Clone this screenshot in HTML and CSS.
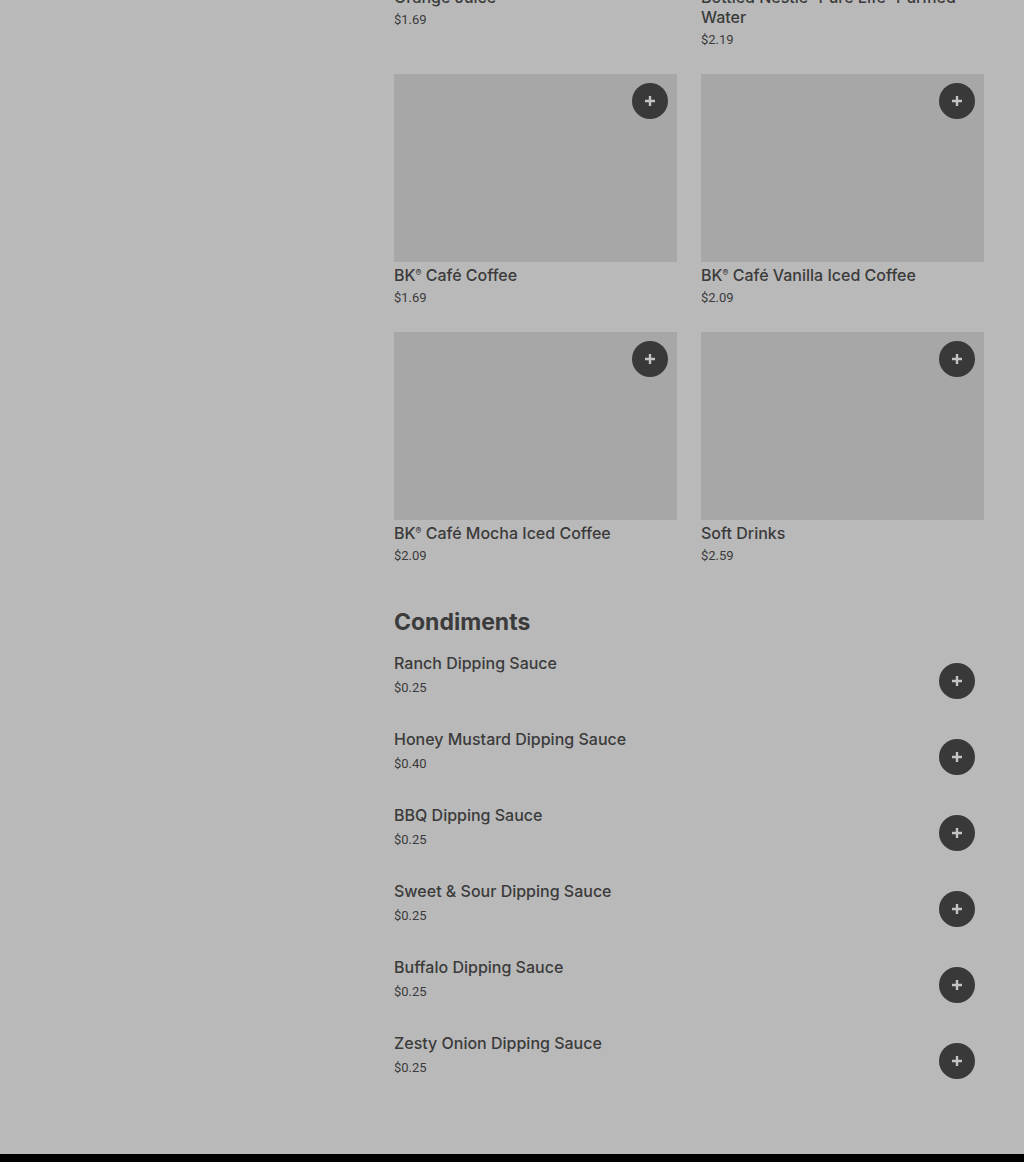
FILE: index.html
```html
<!DOCTYPE html>
<html lang="en">
<head>
  <meta charset="UTF-8" />
  <meta name="viewport" content="width=device-width, initial-scale=1.0"/>
  <title>Menu</title>
  <link rel="stylesheet" href="styles.css">
</head>

<body>
  <div class="page">
    <main class="menu">

      <!-- Beverages (scrolled, top row cut off) -->
      <section class="section">
        <div class="grid">
          <div class="card">
            <div class="thumb"><button class="add" aria-label="Add"><svg viewBox="0 0 12 12"><path d="M6 1v10M1 6h10"/></svg></button></div>
            <div class="name">Orange Juice</div>
            <div class="price">$1.69</div>
          </div>
          <div class="card">
            <div class="thumb"><button class="add" aria-label="Add"><svg viewBox="0 0 12 12"><path d="M6 1v10M1 6h10"/></svg></button></div>
            <div class="name">Bottled Nestlé<span class="reg">®</span> Pure Life<span class="reg">®</span> Purified Water</div>
            <div class="price">$2.19</div>
          </div>
          <div class="card">
            <div class="thumb"><button class="add" aria-label="Add"><svg viewBox="0 0 12 12"><path d="M6 1v10M1 6h10"/></svg></button></div>
            <div class="name">BK<span class="reg">®</span> Café Coffee</div>
            <div class="price">$1.69</div>
          </div>
          <div class="card">
            <div class="thumb"><button class="add" aria-label="Add"><svg viewBox="0 0 12 12"><path d="M6 1v10M1 6h10"/></svg></button></div>
            <div class="name">BK<span class="reg">®</span> Café Vanilla Iced Coffee</div>
            <div class="price">$2.09</div>
          </div>
          <div class="card">
            <div class="thumb"><button class="add" aria-label="Add"><svg viewBox="0 0 12 12"><path d="M6 1v10M1 6h10"/></svg></button></div>
            <div class="name">BK<span class="reg">®</span> Café Mocha Iced Coffee</div>
            <div class="price">$2.09</div>
          </div>
          <div class="card">
            <div class="thumb"><button class="add" aria-label="Add"><svg viewBox="0 0 12 12"><path d="M6 1v10M1 6h10"/></svg></button></div>
            <div class="name">Soft Drinks</div>
            <div class="price">$2.59</div>
          </div>
        </div>
      </section>

      <!-- Condiments -->
      <section class="section condiments">
        <h2 class="section-title">Condiments</h2>
        <ul class="list">
          <li class="row">
            <div><div class="name">Ranch Dipping Sauce</div><div class="price">$0.25</div></div>
            <button class="add" aria-label="Add"><svg viewBox="0 0 12 12"><path d="M6 1v10M1 6h10"/></svg></button>
          </li>
          <li class="row">
            <div><div class="name">Honey Mustard Dipping Sauce</div><div class="price">$0.40</div></div>
            <button class="add" aria-label="Add"><svg viewBox="0 0 12 12"><path d="M6 1v10M1 6h10"/></svg></button>
          </li>
          <li class="row">
            <div><div class="name">BBQ Dipping Sauce</div><div class="price">$0.25</div></div>
            <button class="add" aria-label="Add"><svg viewBox="0 0 12 12"><path d="M6 1v10M1 6h10"/></svg></button>
          </li>
          <li class="row">
            <div><div class="name">Sweet &amp; Sour Dipping Sauce</div><div class="price">$0.25</div></div>
            <button class="add" aria-label="Add"><svg viewBox="0 0 12 12"><path d="M6 1v10M1 6h10"/></svg></button>
          </li>
          <li class="row">
            <div><div class="name">Buffalo Dipping Sauce</div><div class="price">$0.25</div></div>
            <button class="add" aria-label="Add"><svg viewBox="0 0 12 12"><path d="M6 1v10M1 6h10"/></svg></button>
          </li>
          <li class="row">
            <div><div class="name">Zesty Onion Dipping Sauce</div><div class="price">$0.25</div></div>
            <button class="add" aria-label="Add"><svg viewBox="0 0 12 12"><path d="M6 1v10M1 6h10"/></svg></button>
          </li>
        </ul>
      </section>

    </main>
  </div>

  <footer class="footer"></footer>
</body>
</html>
```

FILE: styles.css
```css
* {
  box-sizing: border-box;
}

html,
body {
  margin: 0;
  padding: 0;
}

body {
  font-family: 'Inter', 'Roboto', sans-serif;
  background: #b9b9b9;
  color: #3b3b3b;
  overflow: hidden;
}

.page {
  display: flex;
  padding-left: 394px;
}

.menu {
  width: 590px;
  margin-top: -204px;
}

.grid {
  display: grid;
  grid-template-columns: 1fr 1fr;
  column-gap: 24px;
  row-gap: 25px;
}

.thumb {
  position: relative;
  height: 188px;
  background: #a7a7a7;
}

.card .name {
  margin-top: 3px;
}

.name {
  font-size: 16px;
  line-height: 20px;
  font-weight: 500;
  color: #3b3b3b;
}

.reg {
  font-size: 0.55em;
  vertical-align: 0.55em;
  line-height: 0;
}

.price {
  margin-top: 4px;
  font-family: 'Roboto', sans-serif;
  font-size: 13px;
  line-height: 18px;
  color: #3b3b3b;
}

.add {
  width: 36px;
  height: 36px;
  border-radius: 50%;
  border: none;
  padding: 0;
  background: #393939;
  display: flex;
  align-items: center;
  justify-content: center;
  cursor: pointer;
}

.add svg {
  width: 12px;
  height: 12px;
  stroke: #c4c4c4;
  stroke-width: 2.4;
  fill: none;
}

.thumb .add {
  position: absolute;
  top: 9px;
  right: 9px;
}

/* condiments */
.condiments {
  margin-top: 41px;
  padding-bottom: 45px;
}

.section-title {
  margin: 0 0 15px;
  font-size: 23px;
  line-height: 32px;
  font-weight: 700;
  color: #3b3b3b;
}

.list {
  list-style: none;
  margin: 0;
  padding: 0;
}

.row {
  display: flex;
  justify-content: space-between;
  align-items: flex-start;
  padding-bottom: 30px;
}

.row .price {
  margin-top: 6px;
}

.row .add {
  margin-top: 10px;
  margin-right: 9px;
}

.footer {
  height: 240px;
  background: #000;
}
```
